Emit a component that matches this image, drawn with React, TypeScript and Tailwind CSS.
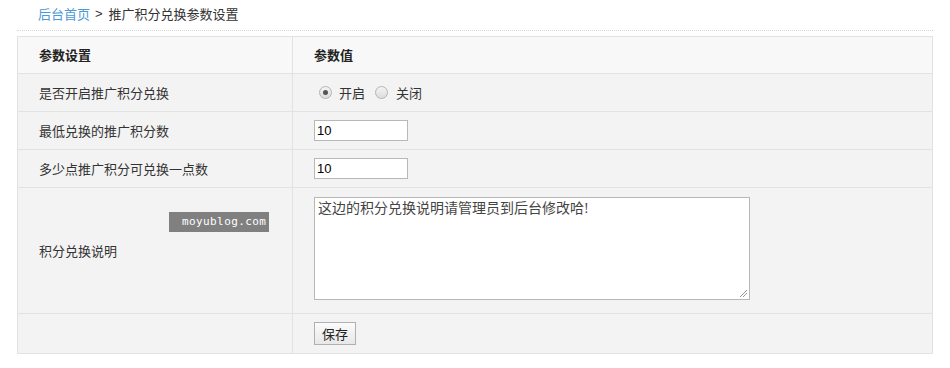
import React from "react";

const font = { fontFamily: '"Microsoft YaHei", "Noto Sans CJK SC", "Liberation Sans", sans-serif' };

function Row({ left, right, h, header = false, last = false, rightClass = "items-center" }: { left: React.ReactNode; right: React.ReactNode; h: string; header?: boolean; last?: boolean; rightClass?: string }) {
  return (
    <div className={`flex ${h} ${last ? "" : "border-b border-[#e2e2e2]"} ${header ? "bg-[#f8f8f8]" : "bg-[#f3f3f3]"}`}>
      <div className="w-[275px] shrink-0 border-r border-[#e2e2e2] pl-[21px] flex items-center relative">{left}</div>
      <div className={`flex-1 pl-[21px] flex ${rightClass}`}>{right}</div>
    </div>
  );
}

function Radio({ checked }: { checked: boolean }) {
  return (
    <span className="inline-flex w-[13px] h-[13px] rounded-full border border-[#b5b5b5] bg-gradient-to-b from-[#f4f4f4] to-[#dcdcdc] items-center justify-center">
      {checked && <span className="w-[5px] h-[5px] rounded-full bg-[#555]" />}
    </span>
  );
}

export default function App() {
  return (
    <div className="w-[950px] h-[368px] bg-white text-[13px] text-[#333]" style={font}>
      <div className="pl-[38px] pt-[4px] h-[30px] leading-[20px] flex">
        <span className="text-[#4b9ad6]">后台首页</span>
        <span className="text-[#333] ml-[5px] mr-[6px]" style={{ fontFamily: '"Liberation Sans", sans-serif' }}>&gt;</span>
        <span className="text-[#333]">推广积分兑换参数设置</span>
      </div>
      <div className="mx-[17px] w-[916px] border-t border-dotted border-[#d8d8d8]" />
      <div className="mx-[17px] mt-[5px] w-[916px] border border-[#e2e2e2]">
        <Row
          header
          h="h-[37px]"
          left={<span className="font-bold text-[#222]">参数设置</span>}
          right={<span className="font-bold text-[#222]">参数值</span>}
        />
        <Row
          h="h-[38px]"
          left={<span>是否开启推广积分兑换</span>}
          right={
            <div className="flex items-center pl-[5px]">
              <Radio checked />
              <span className="ml-[7px]">开启</span>
              <span className="ml-[10px] flex"><Radio checked={false} /></span>
              <span className="ml-[8px]">关闭</span>
            </div>
          }
        />
        <Row
          h="h-[38px]"
          left={<span>最低兑换的推广积分数</span>}
          right={<div className="w-[94px] h-[21px] bg-white border border-[#b8b8b8] pl-[2px] leading-[19px] text-[13px] text-black" style={{ fontFamily: '"Liberation Sans", Arial, sans-serif' }}>10</div>}
        />
        <Row
          h="h-[38px]"
          left={<span>多少点推广积分可兑换一点数</span>}
          right={<div className="w-[94px] h-[21px] bg-white border border-[#b8b8b8] pl-[2px] leading-[19px] text-[13px] text-black" style={{ fontFamily: '"Liberation Sans", Arial, sans-serif' }}>10</div>}
        />
        <Row
          h="h-[126px]"
          rightClass="items-start pt-[9px]"
          left={
            <>
              <span>积分兑换说明</span>
              <div className="absolute left-[151px] top-[24px] w-[100px] h-[20px] bg-[#808080] text-white text-[11px] leading-[20px] pl-[13px] tracking-[0.4px] whitespace-nowrap overflow-hidden" style={{ fontFamily: '"DejaVu Sans Mono", "Liberation Mono", monospace' }}>moyublog.com</div>
            </>
          }
          right={
            <div className="relative w-[436px] h-[103px] bg-white border border-[#b8b8b8] pl-[3px] pt-[1px] text-[14px] text-[#444] leading-[20px]" style={{ fontFamily: '"Liberation Serif", "Noto Sans CJK SC", serif' }}>
              这边的积分兑换说明请管理员到后台修改哈!
              <svg className="absolute right-[1px] bottom-[1px]" width="10" height="10" viewBox="0 0 10 10">
                <line x1="9" y1="2" x2="2" y2="9" stroke="#999" strokeWidth="1" />
                <line x1="9" y1="5" x2="5" y2="9" stroke="#999" strokeWidth="1" />
              </svg>
            </div>
          }
        />
        <Row
          last
          h="h-[39px]"
          left={null}
          right={<div className="w-[42px] h-[23px] border border-[#b0b0b0] bg-gradient-to-b from-[#fbfbfb] to-[#e8e8e8] flex items-center justify-center text-[13px] text-[#222]">保存</div>}
        />
      </div>
    </div>
  );
}
